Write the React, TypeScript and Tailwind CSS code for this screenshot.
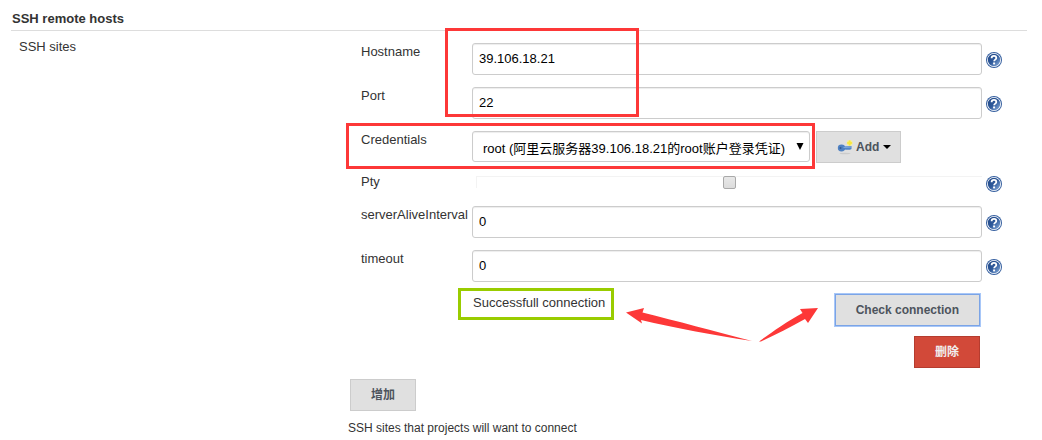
import React from 'react';

function HelpIcon() {
  return (
    <svg width="16" height="16" viewBox="0 0 16 16" fill="none" className="block">
      <defs>
        <linearGradient id="help" x1="0" y1="0" x2="1" y2="1">
          <stop offset="0" stopColor="#1f4584" />
          <stop offset="0.5" stopColor="#2f5a9b" />
          <stop offset="1" stopColor="#8fb3e0" />
        </linearGradient>
      </defs>
      <circle cx="8" cy="8" r="8" fill="#355f9f" />
      <circle cx="8" cy="8" r="7" fill="#fff" />
      <circle cx="8" cy="8" r="6.2" fill="url(#help)" />
      <path d="M5.6 6.2C5.6 4.6 6.600 3.900 8 3.900s2.300.8 2.300 2.100c0 1.600-2.200 1.700-2.200 3.300" stroke="#fff" strokeWidth="1.8" />
      <rect x="7.1" y="10.500" width="2" height="1.900" fill="#fff" />
    </svg>
  );
}

function KeyIcon() {
  return (
    <svg width="16" height="16" viewBox="0 0 16 16" className="block">
      <ellipse cx="8" cy="14.5" rx="5.5" ry="0.7" fill="#cbcbcb" />
      <circle cx="12.600" cy="4" r="3" fill="#f5ee9a" />
      <path d="M6 7.500 14.500 7v3l-1.500.8H9.500L7 10.500z" fill="#5285c6" />
      <ellipse cx="4.500" cy="9" rx="3.700" ry="3.400" fill="#4f81c2" />
      <circle cx="3.500" cy="9" r="1" fill="#31598f" />
      <path d="M6.5 8.400 14 8" stroke="#86aede" strokeWidth="1" />
      <path d="M12.600 1.500v5M10.100 4h5" stroke="#f7e33c" strokeWidth="1.500" />
      <circle cx="12.600" cy="4" r="1.700" fill="#f9e83e" />
    </svg>
  );
}

function HelpButton({ label, className }: { label: string; className: string }) {
  return (
    <button type="button" aria-label={`Help: ${label}`} className={`ml-1 h-4 w-4 shrink-0 ${className}`}>
      <HelpIcon />
    </button>
  );
}

function TextRow({ id, label, value }: { id: string; label: string; value: string }) {
  const [text, setText] = React.useState(value);
  return (
    <div className="mb-3 flex items-start">
      <label htmlFor={id} className="w-[111px] shrink-0 leading-[18px]">{label}</label>
      <input
        id={id}
        type="text"
        className="h-8 min-w-0 flex-1 rounded-[3px] border border-[#ccc] bg-white px-1.5 pb-0.5 text-black shadow-[inset_0_1px_1px_rgba(0,0,0,0.075)] outline-none"
        value={text}
        onChange={e => setText(e.target.value)}
      />
      <HelpButton label={label} className="mt-[9px]" />
    </div>
  );
}

function CredentialsRow() {
  return (
    <div className="relative mb-3 flex h-[31px] items-start">
      <label htmlFor="credentials" className="w-[111px] shrink-0 leading-[18px]">Credentials</label>
      <div className="relative w-[338px]">
        <select
          id="credentials"
          className="block h-[31px] w-full appearance-none rounded-[3px] border border-[#ccc] bg-white pt-1 pl-2.5 text-black shadow-[inset_0_1px_1px_rgba(0,0,0,0.075)] outline-none"
        >
          <option>root (阿里云服务器39.106.18.21的root账户登录凭证)</option>
        </select>
        <svg width="8" height="7" viewBox="0 0 8 7" className="pointer-events-none absolute top-3 right-1.5">
          <path d="M.5 0h7L4 7z" fill="#000" />
        </svg>
      </div>
      <button type="button" className="ml-1.5 flex h-8 items-center border border-[#ccc] bg-[#e0e0e0] pr-[9px] pl-5 text-xs font-bold text-[#4d545d]">
        <KeyIcon />
        <span className="ml-[3px]">Add</span>
        <svg width="8" height="4" viewBox="0 0 8 4" className="ml-1">
          <path d="M0 0h8L4 4z" fill="#000" />
        </svg>
      </button>
      <div className="pointer-events-none absolute -top-2 -left-[15px] h-[46px] w-[469px] border-3 border-[#fd3838]" />
    </div>
  );
}

function PtyRow() {
  return (
    <div className="flex h-8 items-start">
      <label htmlFor="pty" className="w-[111px] shrink-0">Pty</label>
      <div className="mt-0.5 ml-1 flex h-3 flex-1 justify-center border-t border-l border-[#f3f3f3]">
        <input
          id="pty"
          type="checkbox"
          className="-mt-px block h-[13px] w-[13px] appearance-none rounded-[2px] border border-[#a9a9a9] bg-linear-to-b from-[#e8e8e8] to-[#dcdcdc] checked:bg-[#5b8cc9]"
        />
      </div>
      <HelpButton label="Pty" className="mt-0.5" />
    </div>
  );
}

function StatusRow() {
  return (
    <div className="relative flex items-start justify-between pr-[22px] pl-28">
      <span className="leading-[18px]">Successfull connection</span>
      <button type="button" className="h-8 border border-[#7ba4e6] bg-[#e0e0e0] px-5 text-xs font-bold text-[#4d545d] ring-1 ring-[#a8c7f8]">
        Check connection
      </button>
      <div className="pointer-events-none absolute -top-1.5 left-[97px] h-8 w-[156px] border-3 border-[#99cc00]" />
      <svg width="194" height="36" viewBox="0 0 194 36" fill="#fd3838" className="pointer-events-none absolute top-3 left-[264px]">
        <path d="M1 6.500 19 2l-1.500 4.500C52 15 88 25 127 35 87 29 50 22 16 14l1 3.500z" />
        <path d="M193 2l-18 1 2.500 4C161 16 146 27 134 35.500h2C150 29 165 21.500 180 13l3 4z" />
      </svg>
    </div>
  );
}

export default function App() {
  return (
    <form className="pr-[15px] pb-1 pl-[11px] font-['Liberation_Sans','Noto_Sans_CJK_SC',sans-serif] text-[13px] leading-4 text-[#333]">
      <h2 className="border-b border-[#ddd] pt-2.5 pb-0.5 pl-px leading-[18px] font-bold">SSH remote hosts</h2>

      <div className="flex items-start">
        <div className="w-[337px] shrink-0 pt-2 pl-2">SSH sites</div>

        <div className="min-w-0 flex-1 pt-3">
          <div className="pr-[25px] pl-[13px]">
            <div className="relative">
              <TextRow id="hostname" label="Hostname" value="39.106.18.21" />
              <TextRow id="port" label="Port" value="22" />
              <div className="pointer-events-none absolute -top-[15px] left-[84px] h-[89px] w-[194px] border-3 border-[#fd3838]" />
            </div>
            <CredentialsRow />
            <PtyRow />
            <TextRow id="interval" label="serverAliveInterval" value="0" />
            <TextRow id="timeout" label="timeout" value="0" />
            <StatusRow />
            <div className="mt-2.5 flex justify-end pr-[22px]">
              <button type="button" className="h-8 border border-[#b53c2f] bg-[#d24939] px-5 text-xs font-bold text-[#f0f0f0]">
                删除
              </button>
            </div>
          </div>

          <button type="button" className="mt-[11px] ml-0.5 block h-8 border border-[#ccc] bg-[#e0e0e0] px-5 text-xs font-bold text-[#4d545d]">
            增加
          </button>
          <p className="mt-[9px] text-xs">SSH sites that projects will want to connect</p>
        </div>
      </div>
    </form>
  );
}
